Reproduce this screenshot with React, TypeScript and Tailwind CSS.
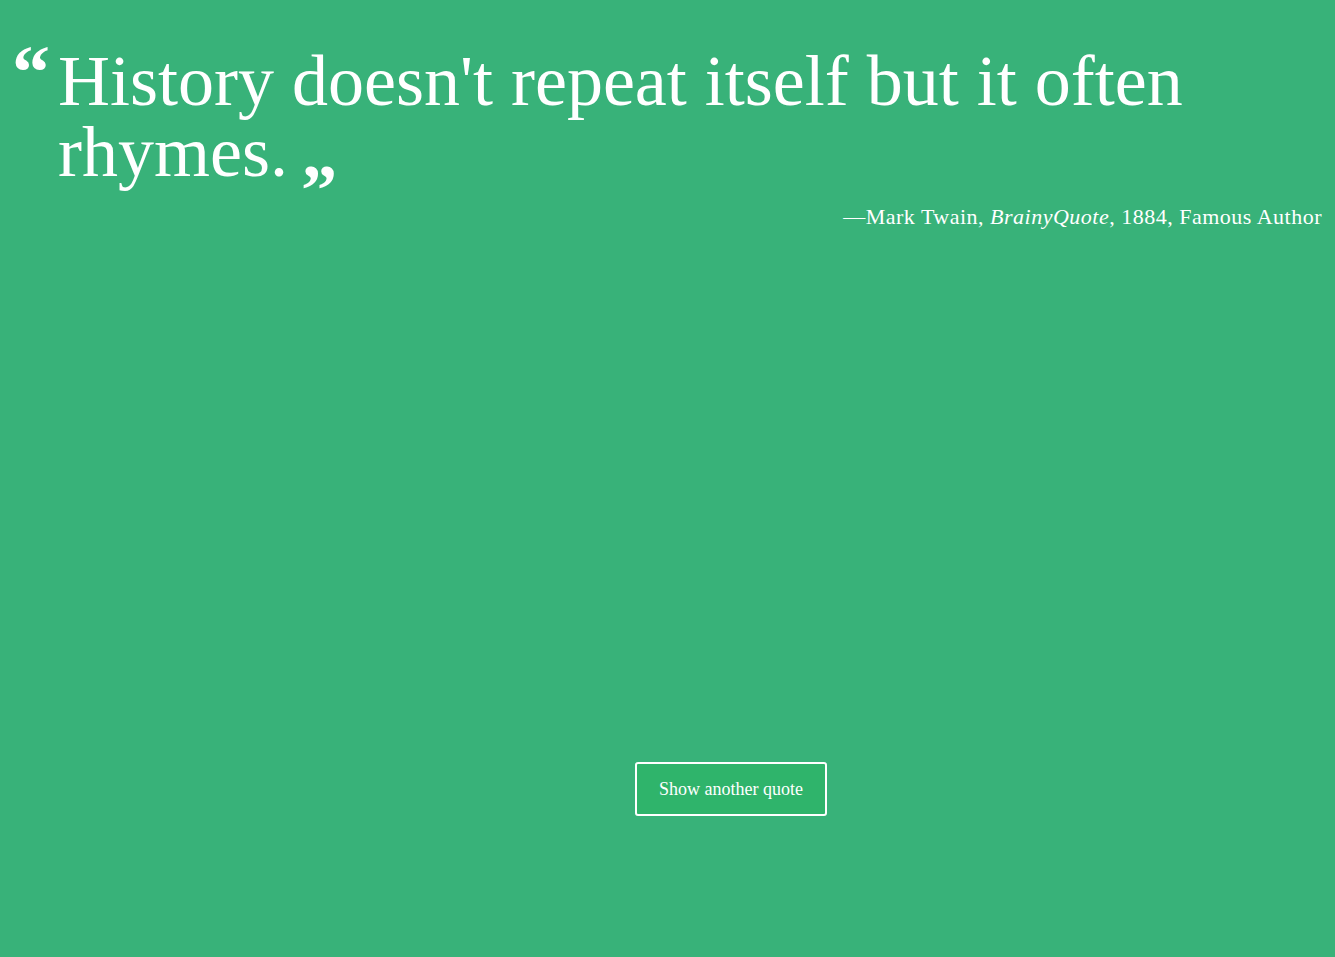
import React from "react";

export default function App() {
  return (
    <div
      className="min-h-screen w-full bg-[#38b279] text-white flex flex-col"
      style={{ fontFamily: '"Liberation Serif", serif' }}
    >
      <div className="flex items-start pt-[30px] pl-[12px] pr-[13px]">
        <span className="text-[76px] leading-[80px] font-bold w-[46px] shrink-0 mt-[2px]">“</span>
        <div className="flex-1 pt-[16px]">
          <p className="text-[72px] leading-[71px] tracking-[0px]">
            History doesn't repeat itself but it often rhymes.{" "}
            <span className="relative top-[38px] left-[-5px] text-[72px] leading-[0] font-bold">”</span>
          </p>
          <p className="text-right text-[22px] mt-[12px] tracking-[0.5px]">
            —Mark Twain, <em>BrainyQuote</em>, 1884, Famous Author
          </p>
        </div>
      </div>
      <div className="flex justify-center pl-[127px] mt-[529px]">
        <button className="w-[192px] h-[54px] border-2 border-white rounded-[3px] bg-[#2fb46b] text-[18px] text-white">
          Show another quote
        </button>
      </div>
    </div>
  );
}
